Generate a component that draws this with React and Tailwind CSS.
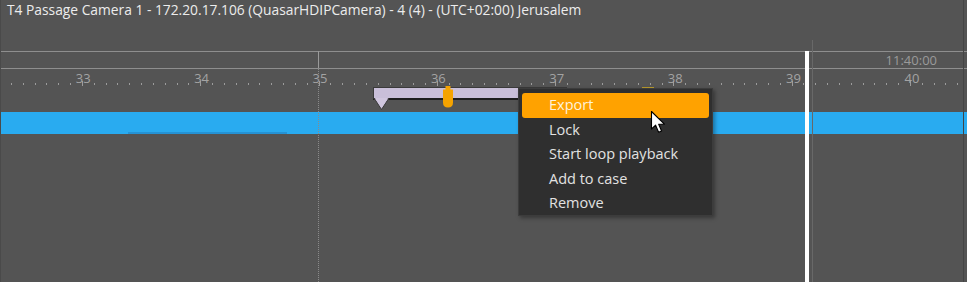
import React from "react";

const MINOR = 11.84;

function TickRow() {
  const cells = [];
  for (let k = -6; k <= 75; k++) {
    const major = ((k % 10) + 10) % 10 === 0;
    cells.push(
      <div key={k} className="w-[11.84px] shrink-0 flex">
        <div
          className={
            major
              ? "w-px h-[5px] mt-[12px] bg-[#9c9c9c]"
              : "w-px h-[2px] mt-[14px] bg-[#9c9c9c]"
          }
        />
      </div>
    );
  }
  return <div className="absolute inset-0 flex pl-[10px]">{cells}</div>;
}

function LabelRow() {
  const labels = [];
  for (let i = 33; i <= 40; i++) {
    labels.push(
      <div
        key={i}
        className="w-[118.4px] shrink-0 text-center text-[13px] leading-[15px] text-[#a3a3a3] pl-[2px]"
      >
        {i}
      </div>
    );
  }
  return <div className="absolute inset-0 flex pl-[22px] pt-[2px]">{labels}</div>;
}

function Cursor() {
  return (
    <svg
      className="absolute left-[649px] top-[110px]"
      width="18"
      height="25"
      viewBox="0 0 18 25"
    >
      <path
        d="M1.5 1.5 L1.5 19 L5.6 15.2 L8.6 22.3 L11.6 21 L8.7 14.2 L14.4 14.2 Z"
        fill="#ffffff"
        stroke="#000000"
        strokeWidth="1.1"
        strokeLinejoin="round"
      />
    </svg>
  );
}

export default function App() {
  const items = ["Export", "Lock", "Start loop playback", "Add to case", "Remove"];
  return (
    <div
      className="relative w-[967px] h-[282px] overflow-hidden bg-[#545454] flex flex-col border-l border-[#4a4a4a]"
      style={{ fontFamily: '"Open Sans", "Noto Sans", sans-serif' }}
    >
      {/* title */}
      <div className="h-[51px] shrink-0 pl-[6px] text-[13.8px] leading-[20px] text-[#ececec] whitespace-nowrap">
        T4 Passage Camera 1 - 172.20.17.106 (QuasarHDIPCamera) - 4 (4) - (UTC+02:00) Jerusalem
      </div>
      {/* time row */}
      <div className="h-[18px] shrink-0 border-y border-[#8e8e8e] flex justify-end pr-[30px]">
        <span className="text-[13px] leading-[16px] text-[#9a9a9a]">11:40:00</span>
      </div>
      {/* ruler + bookmarks */}
      <div className="relative h-[43px] shrink-0">
        <TickRow />
        <LabelRow />
        {/* bookmark bar */}
        <div className="absolute left-[372px] top-[18px] w-[194px] h-[13px] bg-[#c9bfd9] border border-[#3a3a3a] border-b-2 border-b-[#1e1e1e]" />
        <svg className="absolute left-[372px] top-[29px]" width="18" height="13" viewBox="0 0 18 13">
          <path d="M1 0 L16 0 L8.5 11.5 Z" fill="#c9bfd9" stroke="#3a3a3a" strokeWidth="1" />
          <path d="M2 0 L15 0 L8.5 10 Z" fill="#d0c6de" />
        </svg>
        {/* orange marker */}
        <svg className="absolute left-[441px] top-[17px]" width="12" height="22" viewBox="0 0 12 22">
          <path d="M3.5 0 H8.5 V3.5 H11 V16.5 Q11 21.5 6 21.5 Q1 21.5 1 16.5 V3.5 H3.5 Z" fill="#f5a300" />
        </svg>
        {/* small marker tips hidden behind menu */}
        <div className="absolute left-[641px] top-[18px] w-[12px] h-[3px] bg-[#b89a2c]" />
      </div>
      {/* blue bar */}
      <div className="h-[22px] shrink-0 bg-[#29abf0] flex items-end pl-[127px]">
        <div className="w-[159px] h-[2px] bg-[#2592d4]" />
      </div>
      <div className="flex-1" />

      {/* vertical guide lines (playhead overlays) */}
      <div className="absolute left-[317px] top-[51px] w-px h-[17px] bg-[#9a9a9a]" />
      <div className="absolute left-[317px] top-[68px] bottom-0 border-l border-dotted border-[#8a8a8a]" />
      <div className="absolute left-[811px] top-[40px] bottom-0 w-px bg-[#686868]" />
      <div className="absolute left-[804px] top-[51px] bottom-0 w-[4px] bg-[#ffffff]" />
      <div className="absolute right-[3px] top-0 bottom-0 w-px bg-[#454545]" />

      {/* context menu */}
      <div className="absolute left-[517px] top-[88px] w-[195px] h-[128px] bg-[#2f2f2f] border border-[#3c3c3c] shadow-[2px_2px_4px_rgba(0,0,0,0.35)] px-[3px] pt-[4px] flex flex-col">
        {items.map((t, i) => (
          <div
            key={t}
            className={
              "h-[24.5px] shrink-0 pl-[27px] flex items-center text-[14.5px] rounded-[3px] " +
              (i === 0 ? "bg-[#ffa200] text-[#fff3dc]" : "text-[#e2e2e2]")
            }
          >
            {t}
          </div>
        ))}
      </div>
      <Cursor />
    </div>
  );
}
